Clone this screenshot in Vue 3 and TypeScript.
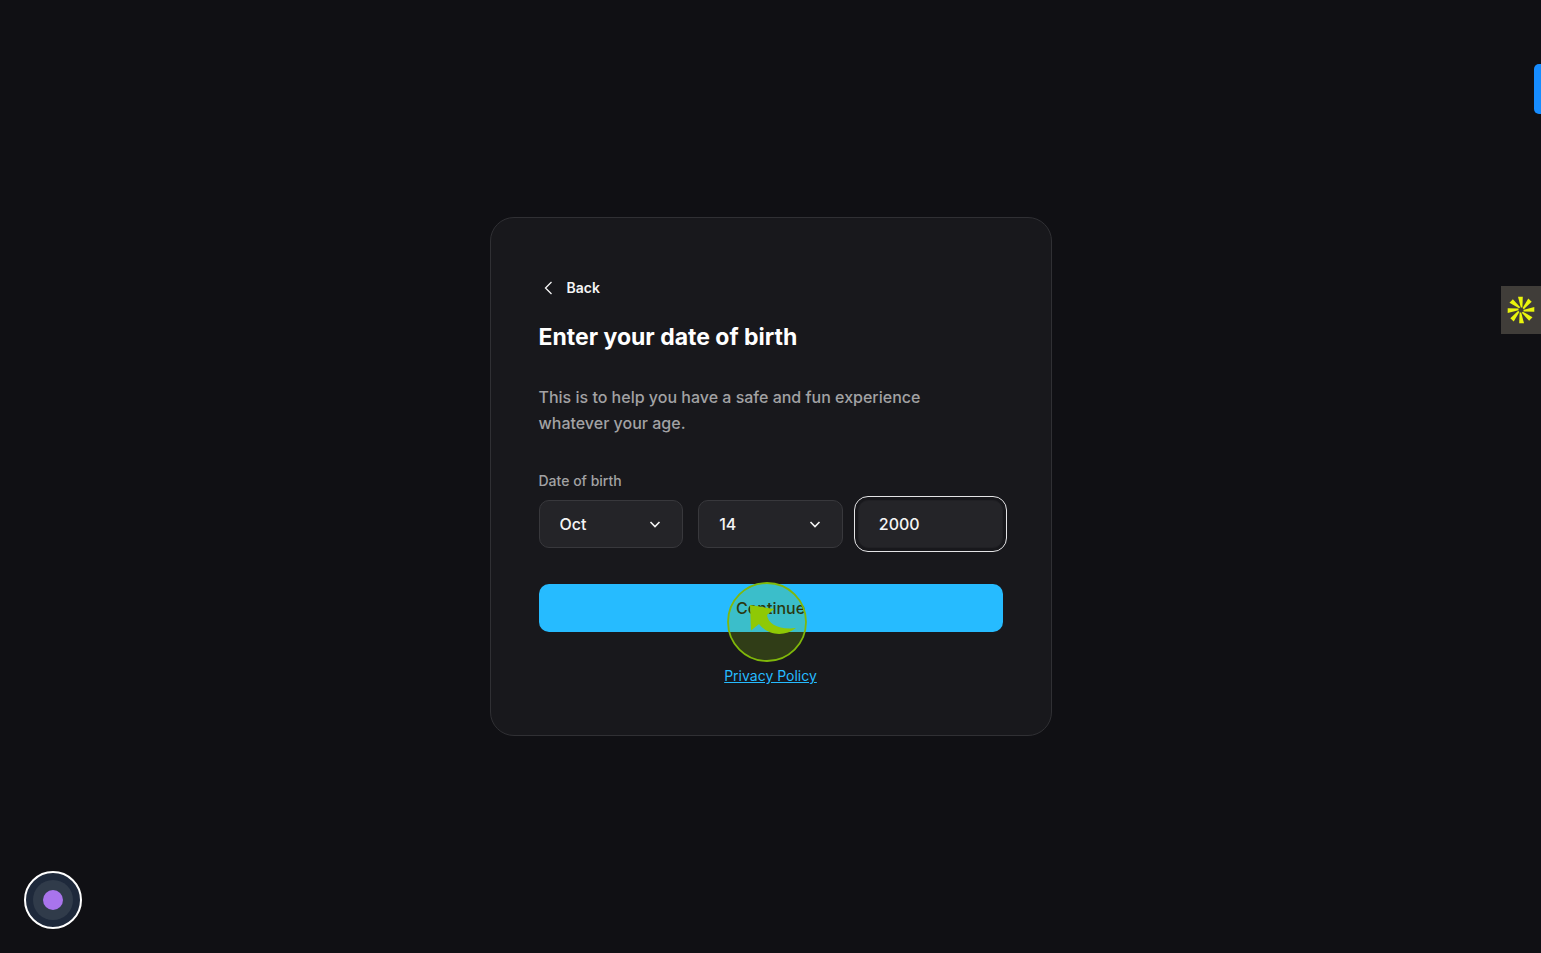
<script setup lang="ts">
import { ref } from 'vue'

const months = ['Jan', 'Feb', 'Mar', 'Apr', 'May', 'Jun', 'Jul', 'Aug', 'Sep', 'Oct', 'Nov', 'Dec']
const days = Array.from({ length: 31 }, (_, i) => i + 1)
const rays = Array.from({ length: 8 }, (_, i) => i * 45)

const month = ref('Oct')
const day = ref(14)
const year = ref('2000')
</script>

<template>
  <main class="page">
    <form class="card" @submit.prevent>
      <button type="button" class="back">
        <svg class="back-icon" viewBox="0 0 20 20" aria-hidden="true">
          <path d="M12.5 4 6.5 10l6 6" />
        </svg>
        Back
      </button>
      <h1 class="title">Enter your date of birth</h1>
      <p class="intro">This is to help you have a safe and fun experience whatever your age.</p>

      <label class="label" for="month">Date of birth</label>
      <div class="fields">
        <div class="select">
          <select id="month" v-model="month" class="field">
            <option v-for="m in months" :key="m" :value="m">{{ m }}</option>
          </select>
          <svg class="chevron" viewBox="0 0 16 16" aria-hidden="true"><path d="M3.5 6 8 10.5 12.5 6" /></svg>
        </div>
        <div class="select">
          <select v-model="day" class="field" aria-label="Day">
            <option v-for="d in days" :key="d" :value="d">{{ d }}</option>
          </select>
          <svg class="chevron" viewBox="0 0 16 16" aria-hidden="true"><path d="M3.5 6 8 10.5 12.5 6" /></svg>
        </div>
        <input v-model="year" class="field year" type="text" inputmode="numeric" aria-label="Year" />
      </div>

      <div class="action">
        <button type="submit" class="continue">Continue</button>
        <svg class="pointer" viewBox="0 0 80 80" aria-hidden="true">
          <circle cx="40" cy="40" r="39" />
          <path d="M23 23 47 27 40 33C41 42 52 48 69 46C58 55 41 54 32 42L24 48.500Z" />
        </svg>
      </div>

      <a class="privacy" href="#privacy">Privacy Policy</a>
    </form>

    <button type="button" class="side-tab" aria-label="Open panel"></button>
    <button type="button" class="spark" aria-label="Open assistant">
      <svg viewBox="0 0 28 28" aria-hidden="true">
        <path v-for="r in rays" :key="r" d="M11 .7h4.800l-.4 10.800h-1.600z" :transform="`rotate(${r} 14 14)`" />
      </svg>
    </button>
    <button type="button" class="recorder" aria-label="Recorder"><span class="ring"><span class="dot"></span></span></button>
  </main>
</template>

<style>
body {
  margin: 0;
  background: #101014;
}
</style>

<style scoped>
.page {
  position: relative;
  box-sizing: border-box;
  min-height: 100vh;
  display: grid;
  place-items: center;
  overflow: hidden;
  background: #101014;
  color: #f5f5f5;
  font-family: Inter, "Liberation Sans", sans-serif;
}

button {
  padding: 0;
  border: 0;
  font: inherit;
  cursor: pointer;
}

.card {
  box-sizing: border-box;
  width: 100%;
  max-width: 562px;
  display: flex;
  flex-direction: column;
  padding: 60px 48px 49px;
  border: 1px solid #303034;
  border-radius: 24px;
  background: #18181c;
}

.back {
  align-self: flex-start;
  display: flex;
  align-items: center;
  gap: 8px;
  background: none;
  color: #f5f5f5;
  font-size: 14px;
  line-height: 20px;
  font-weight: 600;
}

.back-icon {
  width: 20px;
  height: 20px;
  fill: none;
  stroke: currentColor;
  stroke-width: 1.3;
}

.title {
  margin: 24px 0 0;
  color: #fff;
  font-size: 23px;
  line-height: 30px;
  font-weight: 700;
}

.intro {
  max-width: 440px;
  margin: 32px 0 0;
  color: #a2a2a4;
  font-size: 16px;
  line-height: 26px;
  font-weight: 500;
}

.label {
  margin-top: 35px;
  color: #a2a2a4;
  font-size: 14px;
  line-height: 20px;
  font-weight: 500;
}

.fields {
  display: grid;
  grid-template-columns: repeat(3, minmax(0, 1fr));
  gap: 15px;
  margin-top: 9px;
}

.select {
  position: relative;
}

.field {
  appearance: none;
  box-sizing: border-box;
  display: block;
  width: 100%;
  height: 48px;
  margin: 0;
  padding: 0 20px;
  border: 1px solid #38383c;
  border-radius: 10px;
  background: #242428;
  color: #f5f5f5;
  font: 500 16px/24px Inter, "Liberation Sans", sans-serif;
}

.year {
  border-color: #202024;
  outline: 1px solid #e4e4e6;
  outline-offset: 3px;
}

.chevron {
  position: absolute;
  top: 16px;
  right: 20px;
  width: 16px;
  height: 16px;
  fill: none;
  stroke: #f5f5f5;
  stroke-width: 1.6;
  pointer-events: none;
}

.action {
  position: relative;
  margin-top: 36px;
}

.continue {
  display: block;
  width: 100%;
  height: 48px;
  border-radius: 10px;
  background: #26bbff;
  color: #101014;
  font-size: 16px;
  line-height: 24px;
  font-weight: 500;
}

.pointer {
  position: absolute;
  top: -2px;
  left: calc(50% - 44px);
  width: 80px;
  height: 80px;
  pointer-events: none;
}

.pointer circle {
  fill: rgba(143, 201, 5, 0.21);
  stroke: #80b80a;
  stroke-width: 1.8;
}

.pointer path {
  fill: #8fc905;
}

.privacy {
  align-self: center;
  margin-top: 34px;
  color: #26bbff;
  font-size: 14px;
  line-height: 20px;
}

.side-tab {
  position: absolute;
  top: 64px;
  right: 0;
  width: 7px;
  height: 50px;
  border-radius: 5px 0 0 5px;
  background: #168cff;
}

.spark {
  position: absolute;
  top: 286px;
  right: 0;
  width: 40px;
  height: 48px;
  display: grid;
  place-items: center;
  background: #403d39;
}

.spark svg {
  width: 28px;
  height: 28px;
  fill: #e9f50c;
}

.recorder {
  position: absolute;
  left: 24px;
  bottom: 24px;
  box-sizing: border-box;
  width: 58px;
  height: 58px;
  display: grid;
  place-items: center;
  border: 2px solid #fff;
  border-radius: 50%;
  background: #1e293b;
}

.ring {
  width: 40px;
  height: 40px;
  display: grid;
  place-items: center;
  border-radius: 50%;
  background: #303b4a;
}

.dot {
  width: 20px;
  height: 20px;
  border-radius: 50%;
  background: #a974ec;
}
</style>
